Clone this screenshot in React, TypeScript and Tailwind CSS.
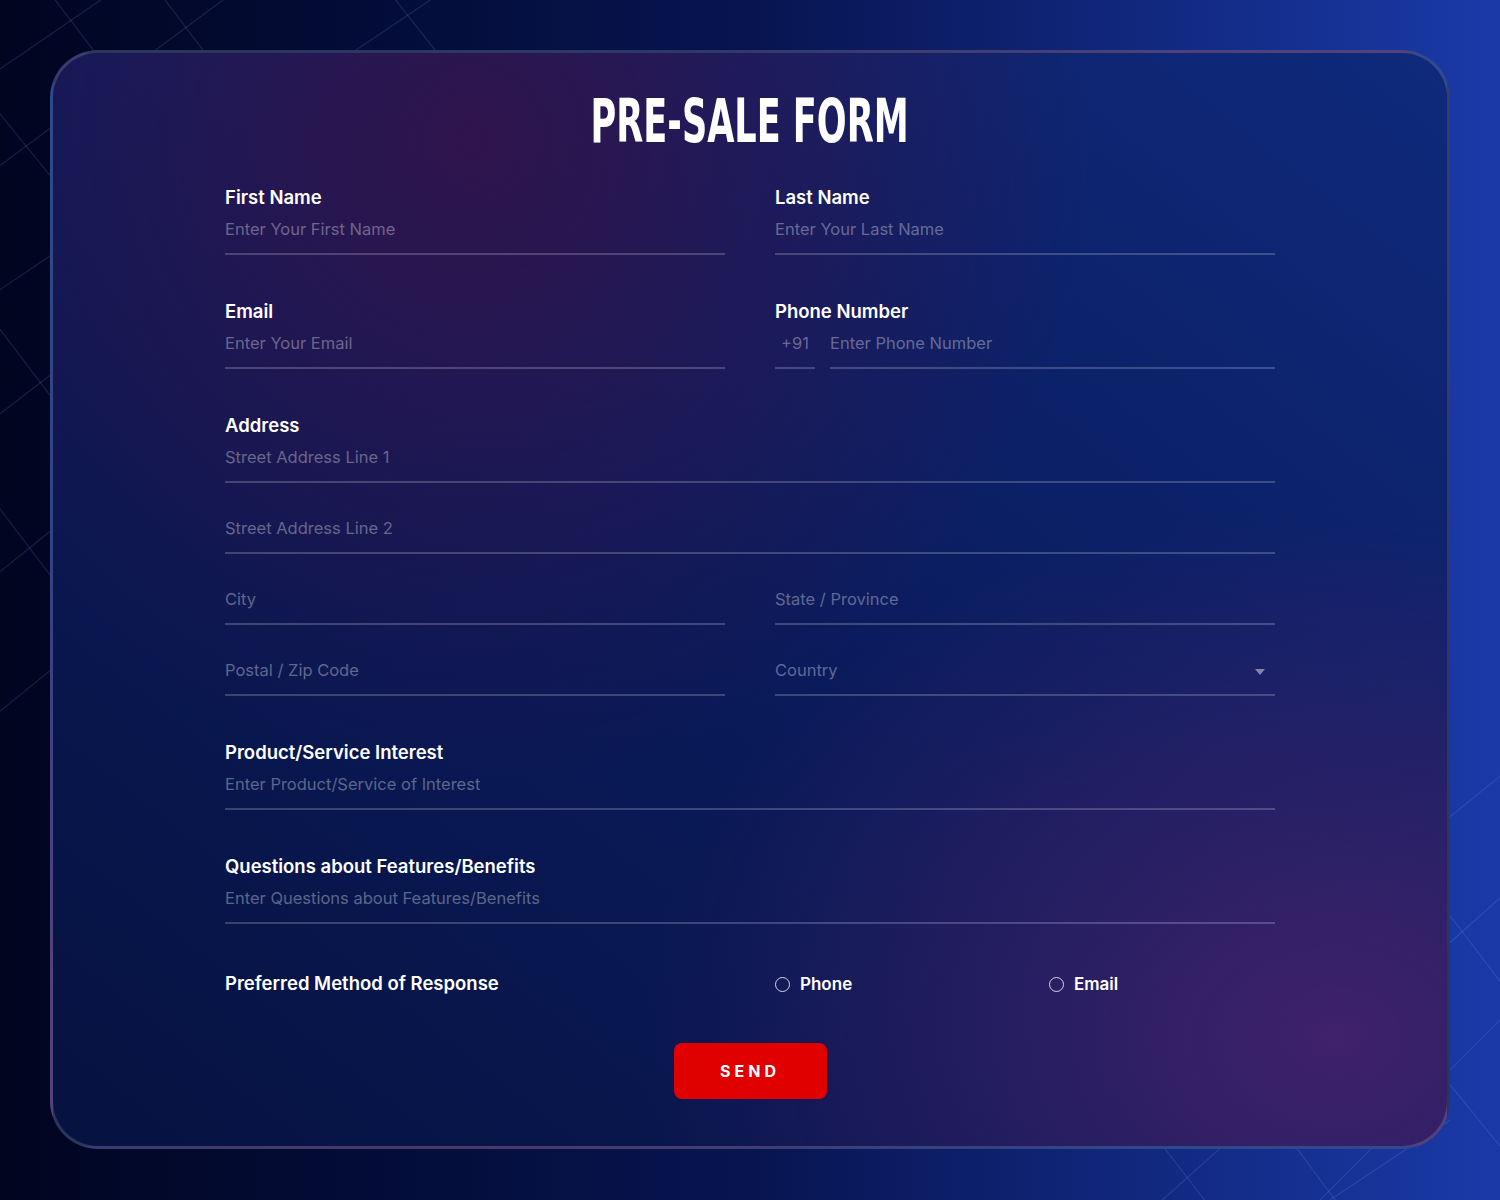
import React from "react";

const labelCls = "h-6 leading-6 text-[18.5px] font-semibold text-white";
const inputCls =
  "h-[46px] w-full pb-1 border-b-2 border-white/20 bg-transparent text-[16.5px] text-white placeholder:text-white/35 outline-none";

function Field({ label, placeholder }: { label?: string; placeholder: string }) {
  return (
    <div className="flex flex-col">
      {label && <label className={labelCls}>{label}</label>}
      <input placeholder={placeholder} className={inputCls} />
    </div>
  );
}

function Radio({ name, label }: { name: string; label: string }) {
  return (
    <label className="flex items-center gap-[10px] text-[17px] font-semibold text-white pt-[3px]">
      <span className="w-[15px] h-[15px] rounded-full border-[1.5px] border-white/80" />
      <input type="radio" name={name} className="hidden" />
      {label}
    </label>
  );
}

const lines: [number, number, number, number][] = [
  // top-left lattice
  [40, -20, 420, 480],
  [150, -20, 520, 470],
  [-60, 40, 330, 520],
  [-60, 250, 220, 620],
  [-60, 430, 160, 720],
  [380, -20, 600, 260],
  [130, -20, -60, 110],
  [250, -20, -60, 210],
  [460, -20, -60, 330],
  [330, 160, -60, 460],
  [300, 330, -60, 620],
  [260, 500, -60, 760],
  // bottom-right lattice
  [1520, 880, 1140, 1220],
  [1520, 1000, 1300, 1220],
  [1520, 760, 1100, 1100],
  [1400, 850, 1560, 1060],
  [1300, 900, 1560, 1220],
  [1150, 950, 1350, 1220],
  [1050, 1000, 1220, 1220],
  [1450, 1120, 1300, 1220],
];

export default function App() {
  return (
    <div
      className="relative min-h-screen w-full overflow-hidden p-[50px] bg-[linear-gradient(to_right,#000520_0%,#071450_50%,#1a3aa8_100%)]"
      style={{ fontFamily: "Inter, 'Noto Sans', sans-serif" }}
    >
      <svg className="absolute inset-0 w-full h-full" viewBox="0 0 1500 1200" preserveAspectRatio="none">
        {lines.map(([x1, y1, x2, y2], i) => (
          <line key={i} x1={x1} y1={y1} x2={x2} y2={y2} stroke="rgba(150,170,255,0.16)" strokeWidth="1.2" />
        ))}
      </svg>

      <div className="relative rounded-[48px] border-[3px] border-white/15 px-[172px] pt-[37px] pb-[47px] bg-[radial-gradient(ellipse_at_30%_8%,rgba(50,20,75,0.95),transparent_45%),radial-gradient(ellipse_at_92%_90%,rgba(66,34,106,0.95),transparent_38%),linear-gradient(to_top_right,#061240_0%,#0a1b5c_50%,#0f2a7c_100%)]">
        <div className="h-[60px] flex justify-center">
          <h1
            className="inline-block h-[60px] leading-[60px] text-[60px] font-bold text-white scale-x-[0.65] translate-y-[1px]"
            style={{ fontFamily: "'DejaVu Sans Condensed', 'Liberation Sans', sans-serif" }}
          >
            PRE-SALE FORM
          </h1>
        </div>

        <div className="mt-[35px] grid grid-cols-2 gap-x-[50px] gap-y-[44px]">
          <Field label="First Name" placeholder="Enter Your First Name" />
          <Field label="Last Name" placeholder="Enter Your Last Name" />
          <Field label="Email" placeholder="Enter Your Email" />
          <div className="flex flex-col">
            <label className={labelCls}>Phone Number</label>
            <div className="flex gap-[15px]">
              <div className="w-[40px] shrink-0 h-[46px] pb-1 border-b-2 border-white/20 flex items-center justify-center text-[16.5px] text-white/35">
                +91
              </div>
              <input placeholder="Enter Phone Number" className={inputCls + " min-w-0"} />
            </div>
          </div>
        </div>

        <div className="mt-[44px] flex flex-col gap-[25px]">
          <Field label="Address" placeholder="Street Address Line 1" />
          <Field placeholder="Street Address Line 2" />
          <div className="grid grid-cols-2 gap-x-[50px] gap-y-[25px]">
            <Field placeholder="City" />
            <Field placeholder="State / Province" />
            <Field placeholder="Postal / Zip Code" />
            <div className="relative">
              <select className={inputCls + " appearance-none text-white/35"} defaultValue="">
                <option value="" disabled>
                  Country
                </option>
              </select>
              <svg className="absolute right-[10px] top-[19px] w-[10px] h-[6px]" viewBox="0 0 10 6">
                <path d="M0 0h10L5 6z" fill="rgba(255,255,255,0.45)" />
              </svg>
            </div>
          </div>
        </div>

        <div className="mt-[44px] flex flex-col gap-[44px]">
          <Field label="Product/Service Interest" placeholder="Enter Product/Service of Interest" />
          <Field label="Questions about Features/Benefits" placeholder="Enter Questions about Features/Benefits" />
        </div>

        <div className="mt-[47px] h-6 flex items-center">
          <div className="w-[550px] pt-[2px] text-[18.5px] font-semibold text-white">Preferred Method of Response</div>
          <div className="w-[274px]">
            <Radio name="method" label="Phone" />
          </div>
          <Radio name="method" label="Email" />
        </div>

        <div className="mt-[48px] flex justify-center">
          <button className="w-[153px] h-[56px] rounded-[8px] bg-[#e00000] text-white text-[16px] font-bold tracking-[4px]">
            SEND
          </button>
        </div>
      </div>
    </div>
  );
}
